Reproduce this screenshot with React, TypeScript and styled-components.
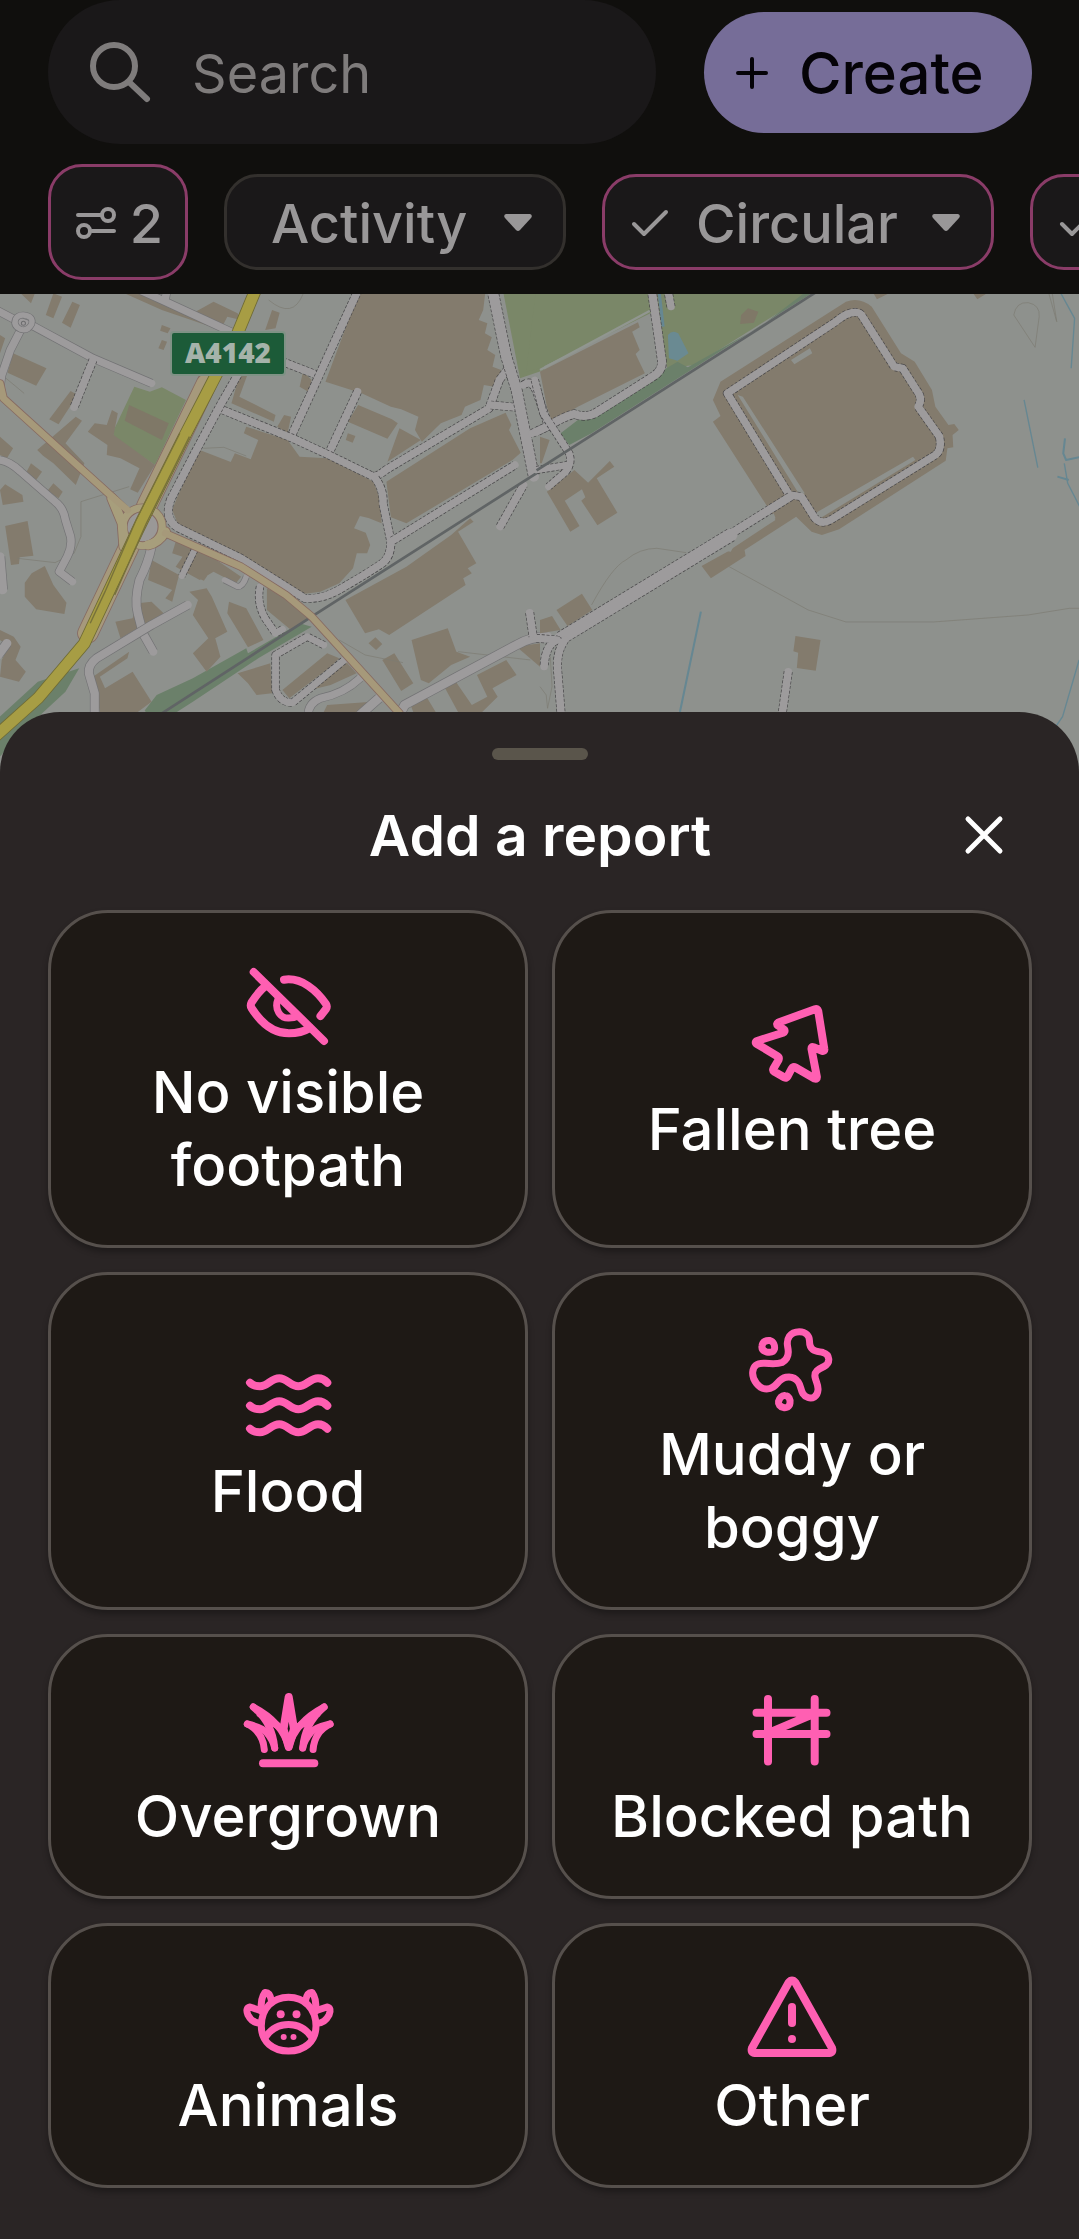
import React from "react";
import styled, { createGlobalStyle } from "styled-components";

const color = {
  page: "#100f0d",
  field: "#1a1819",
  dim: "#999798",
  placeholder: "#7f7c7c",
  accentDim: "#8a3c68",
  outlineDim: "#33302d",
  create: "#766d98",
  sheet: "#2a2525",
  handle: "#5a554b",
  card: "#1e1915",
  cardBorder: "#56504c",
  accent: "#ff5fb2",
};

const GlobalStyle = createGlobalStyle`
  *, *::before, *::after { box-sizing: border-box; }
  body {
    margin: 0;
    background: ${color.sheet};
    font-family: Inter, "Open Sans", sans-serif;
    font-size: 54px;
    font-weight: 500;
  }
  button, input { font: inherit; color: inherit; }
  button { cursor: pointer; }
`;

const Page = styled.main`
  display: flex;
  flex-direction: column;
  overflow: hidden;
`;

const Header = styled.header`
  display: flex;
  flex-direction: column;
  gap: 20px;
  padding-bottom: 14px;
  background: ${color.page};
`;

const SearchRow = styled.div`
  display: flex;
  align-items: center;
  gap: 48px;
  padding: 0 47px 0 48px;
`;

const SearchField = styled.label`
  flex: 1;
  min-width: 0;
  height: 144px;
  display: flex;
  align-items: center;
  gap: 38px;
  padding: 0 40px;
  border-radius: 72px;
  background: ${color.field};
  color: ${color.placeholder};
`;

const SearchInput = styled.input`
  flex: 1;
  min-width: 0;
  padding: 2px 0 0;
  border: 0;
  outline: 0;
  background: transparent;
  font-weight: 400;
  &::placeholder { color: ${color.placeholder}; opacity: 1; }
`;

const CreateButton = styled.button`
  height: 121px;
  min-width: 328px;
  display: flex;
  align-items: center;
  gap: 30px;
  padding: 2px 31px 0;
  border: 0;
  border-radius: 61px;
  background: ${color.create};
  color: #050308;
  font-size: 58px;
`;

const FilterRow = styled.div`
  display: flex;
  align-items: center;
  gap: 36px;
  padding-left: 48px;
  overflow: hidden;
`;

const Chip = styled.button<{ $active?: boolean; $tall?: boolean; $width: number }>`
  flex: none;
  min-width: ${(p) => p.$width}px;
  height: ${(p) => (p.$tall ? 116 : 96)}px;
  display: flex;
  align-items: center;
  justify-content: space-between;
  padding: ${(p) => (p.$tall ? "2px 22px 0 24px" : "2px 31px 0 26px")};
  border: 3px solid ${(p) => (p.$active ? color.accentDim : color.outlineDim)};
  border-radius: 34px;
  background: ${color.field};
  color: ${color.dim};
`;

const ChipLabel = styled.span<{ $inset?: boolean }>`
  flex: 1;
  padding-left: ${(p) => (p.$inset ? 18 : 27)}px;
  text-align: left;
`;

const MapArea = styled.div`
  height: 482px;
  svg { display: block; width: 100%; height: 100%; }
`;

const Sheet = styled.section`
  position: relative;
  margin-top: -64px;
  padding: 36px 47px 52px 48px;
  border-radius: 60px 60px 0 0;
  background: ${color.sheet};
  color: #fff;
`;

const Handle = styled.div`
  width: 96px;
  height: 12px;
  margin: 0 auto;
  border-radius: 6px;
  background: ${color.handle};
`;

const SheetHeader = styled.div`
  display: grid;
  grid-template-columns: 96px 1fr 96px;
  align-items: center;
  padding: 27px 0;
`;

const SheetTitle = styled.h1`
  grid-column: 2;
  margin: 0;
  padding-top: 2px;
  font-size: 57px;
  line-height: 94px;
  font-weight: 600;
  text-align: center;
`;

const CloseButton = styled.button`
  height: 96px;
  display: grid;
  place-items: center;
  padding: 0;
  border: 0;
  background: transparent;
`;

const ReportGrid = styled.div`
  display: grid;
  grid-template-columns: 1fr 1fr;
  gap: 24px;
`;

const ReportCard = styled.button`
  display: flex;
  flex-direction: column;
  align-items: center;
  justify-content: center;
  gap: 5px;
  padding: 46px 46px 43px;
  border: 3px solid ${color.cardBorder};
  border-radius: 60px;
  background: ${color.card};
  box-shadow: 0 4px 6px rgba(0, 0, 0, 0.3);
  font-size: 58px;
  line-height: 73px;
`;

const ReportIcon = styled.svg`
  width: 96px;
  height: 92px;
  overflow: visible;
  fill: none;
  stroke: ${color.accent};
  stroke-width: 8;
  stroke-linecap: round;
  stroke-linejoin: round;
`;

const ReportLabel = styled.span`
  max-width: 380px;
`;

const Check = () => (
  <svg width="38" height="30" viewBox="0 0 38 30" fill="none" stroke="currentColor" strokeWidth="4" strokeLinecap="round" strokeLinejoin="round">
    <path d="M3 16 L13 26 L35 4" />
  </svg>
);

const Caret = () => (
  <svg width="28" height="18" viewBox="0 0 28 18" fill="currentColor">
    <path d="M2 0 H26 Q29 1 27 4 L16 16 Q14 18 12 16 L1 4 Q-1 1 2 0 Z" />
  </svg>
);

const icons = {
  hidden: (
    <>
      <path d="M13.7 13 L84 82" />
      <path d="M44 20.7 C62 18 77 32 86 45 Q87.5 47.5 86 50 L80.5 57" />
      <path d="M25 27.5 Q19 32 11.5 43.5 Q10 46.5 11.5 49 C21 64 34 74.3 49 74.3 C57 74.3 64 72.5 70 69" />
      <path strokeWidth="7" d="M38 40 C34 50 40 59.5 49 59 Q54 59 58 57" />
    </>
  ),
  tree: (
    <path d="M71 13.2 L34.500 26.500 Q32 28 34 29.500 L40 33.500 Q41.500 35.500 39 36.800 L13 45 Q10.500 46.500 13 48 L33 60 Q35.500 61.500 34.500 64 L29.500 72.500 Q28.500 74.500 30.500 75.800 L40.500 81.500 Q42.500 82.500 43.500 80.500 L47.700 72.500 Q49 70 51.500 71.500 L70.500 82.500 Q73.300 83.500 72.800 80.500 L67.500 53 Q67.300 50.500 69.500 51.300 L78 54.800 Q80.800 55.500 80.300 53 L74.200 15 Q73.500 12.400 71 13.200 Z" />
  ),
  flood: (
    <>
      {[-5, 18, 41].map((y) => (
        <path key={y} transform={`translate(0 ${y})`} d="M10 29.7 C12 32 16 33.3 20 33.3 C28 33.3 31 25.3 39.3 25.3 C47 25.3 50.5 33.3 58.3 33.3 C66 33.3 70 25.3 78 25.3 C82 25.3 85 27 87.3 29.7" />
      ))}
    </>
  ),
  mud: (
    <g strokeWidth="7">
      <path d="M55.3 10.7 C62 10.7 65.5 15 65.5 20 C65.5 31 73 30 79 31.5 C86 33.5 87 42 80 45.5 C75 48 70 50 71 56 C72 61 74.5 64 74 69 C73.5 76 68 78 64 76.5 C56 74 58 66 54.3 61 C51 56.5 46 55.5 42 56.3 C33 58 33 68 22.7 68 C15 68 8 59 8.7 51 C9.5 43 15 42 21 42.3 C28 43 33 43.5 38 41.5 C45 38 45 32 43.7 26 C42 18 46 10.7 55.3 10.7 Z" />
      <path d="M18 25 C18.5 20.5 22.5 19 26 19.5 C29.5 20.5 31 24.5 30.5 28 C29.5 32 25.5 31.5 22.5 31 C19.5 30 17.5 28 18 25 Z" />
      <path d="M41 74.5 C45 75 46.5 78.5 46 82 C45.5 86 42.5 87 39.5 86.5 C36 86 34 83 34.5 80.5 C35.5 77 38 74 41 74.5 Z" />
    </g>
  ),
  grass: (
    <g transform="translate(0 -9)">
      <path d="M48.7 23 L43.5 55 L48.7 73 L54 55 Z" />
      {["", "translate(97.4 0) scale(-1 1)"].map((t) => (
        <g key={t} transform={t} strokeWidth="7">
          <path d="M13.3 33 Q42 48 48.7 73" />
          <path d="M13.3 33 Q33 50 34.7 74 M20 40 L38 52" />
          <path d="M7.3 50 Q24 54 27 59 Q33 66 34.7 74" />
          <path d="M7.3 50 Q23 58 24.3 75.5" />
        </g>
      ))}
      <path d="M23 89.3 H74.3" />
    </g>
  ),
  fence: (
    <path transform="translate(0 -9)" d="M24 25 V87.5 M70.7 25 V87.5 M12.5 38.7 H82.5 M12.5 60 H82.5 M28 57.5 L67 41" />
  ),
  cow: (
    <g strokeWidth="7">
      <path d="M48.5 25.3 C64 25.3 76 36 76 54 C76 70 64 79 48.5 79 C33 79 21.3 70 21.3 54 C21.3 36 33 25.3 48.5 25.3 Z" />
      <path d="M25.5 65 Q34 52.5 48.5 52.5 Q63 52.5 71.5 65" />
      {["", "translate(97 0) scale(-1 1)"].map((t) => (
        <g key={t} transform={t}>
          <path d="M21.5 39 Q20 27 25 20.5 Q30 20 31.5 29" />
          <path d="M20.5 38.5 L10 35 Q5 36 8 43 Q12 51 20 51.3" />
        </g>
      ))}
      <g fill={color.accent} stroke="none">
        <circle cx="40.7" cy="42.3" r="4" />
        <circle cx="56.5" cy="42.3" r="4" />
        <circle cx="43.7" cy="65" r="3" />
        <circle cx="53.5" cy="65" r="3" />
      </g>
    </g>
  ),
  warning: (
    <>
      <path d="M44.7 10.5 Q48 6.5 51.3 10.5 L88 76 Q89.5 80.7 85 81 H11 Q6.5 80.7 8 76 Z" />
      <path d="M48 35 V51" />
      <circle cx="48" cy="67" r="4" fill={color.accent} stroke="none" />
    </>
  ),
};

type IconName = keyof typeof icons;

const reports: { icon: IconName; label: string }[] = [
  { icon: "hidden", label: "No visible footpath" },
  { icon: "tree", label: "Fallen tree" },
  { icon: "flood", label: "Flood" },
  { icon: "mud", label: "Muddy or boggy" },
  { icon: "grass", label: "Overgrown" },
  { icon: "fence", label: "Blocked path" },
  { icon: "cow", label: "Animals" },
  { icon: "warning", label: "Other" },
];

const BUILDING = "#837b6d";
const GREEN = "#7a8768";
const WOOD = "#6b806a";

const westBuildings = [
  "M1045 0 H1410 L1403 60 L1390 90 L1415 100 L1408 130 L1428 142 L1415 180 L1438 195 L1430 230 L1455 240 L1435 290 L1405 285 L1395 330 L1350 350 L1340 375 L1280 400 L1225 455 L1205 420 L1215 380 L1165 358 L1135 350 L1050 310 L945 275 Z",
  "M580 480 L670 516 L682 490 L728 508 L750 450 L708 430 L715 410 L835 450 L870 500 L950 505 L1085 575 L1102 625 L1108 700 L1070 684 L1045 678 L1028 715 L1062 728 L1075 765 L1066 790 L1036 790 L1025 835 L985 880 L930 905 L880 912 L820 880 L520 710 L500 660 L515 620 Z",
  "M1122 575 L1365 415 L1468 368 L1485 405 L1478 420 L1512 488 L1488 510 L1180 700 L1135 682 Z",
  "M1040 345 L1138 388 L1155 400 L1125 446 L1010 395 Z M1160 415 L1222 450 L1125 515 Z M1010 430 l22 8 l-8 20 l-20 -8 Z",
  "M1003 930 L1180 830 L1310 735 L1365 685 L1375 695 L1330 725 L1383 820 L1358 835 L1370 850 L1345 865 L1352 885 L1130 1035 L1100 1018 L1060 1030 Z",
  "M1195 1050 L1300 1015 L1325 1085 L1365 1100 L1310 1125 L1245 1180 L1222 1170 Z M1110 1110 L1145 1090 L1200 1180 L1165 1203 Z M1070 1060 l20 -18 l20 20 l-18 18 Z",
  "M1290 1190 L1320 1170 L1370 1245 L1415 1220 L1385 1155 L1470 1110 L1500 1155 L1430 1195 L1445 1220 L1400 1266 H1330 Z M1500 1070 L1568 1060 V1130 Z M1190 1240 L1235 1215 L1265 1266 H1200 Z",
  "M38 190 L135 235 L105 287 L22 248 Z M155 10 L180 20 L155 85 L133 75 Z M210 35 L232 45 L205 113 L180 98 Z M50 0 H105 L90 40 Z M0 135 L15 145 L0 190 Z M340 0 H420 L560 70 L620 35 L690 70 L700 90 L660 80 L640 120 L470 60 Z",
  "M205 303 L225 315 L170 403 L143 388 Z M220 380 L238 392 L190 460 L245 520 L220 585 L155 520 L125 497 L108 480 Z M325 360 L342 370 L330 435 L450 525 L400 608 L378 598 L405 535 L350 505 L310 495 L312 465 L255 425 L275 400 L310 405 Z M470 105 l25 10 l-8 15 l-22 -8 Z M470 150 l15 5 l-10 25 l-15 -5 Z",
  "M0 440 L38 475 L20 505 L0 495 Z M90 520 L122 545 L105 570 L75 550 Z M15 583 L65 615 L68 635 L8 645 L0 600 Z M155 580 L182 605 L170 625 L138 602 Z",
  "M15 708 L80 693 L97 797 L57 802 L55 822 L32 825 Z M92 850 L130 828 L155 885 L193 938 L187 972 L105 958 L72 920 L72 878 Z M0 1020 L40 1040 L60 1070 L45 1110 L75 1145 L55 1175 L0 1160 L5 1110 L25 1070 L0 1050 Z",
  "M510 755 L600 790 L700 860 L685 880 L620 845 L580 870 L510 830 L530 800 L500 790 Z M440 810 L520 855 L500 935 L480 925 L500 900 L430 870 Z M400 940 L440 935 L475 970 L350 1045 L335 995 L385 985 Z M580 845 l22 12 l-10 15 l-18 -8 Z",
  "M550 905 L600 895 L615 920 L660 1025 L625 1045 L640 1100 L600 1145 L560 1090 L605 1045 L560 975 L575 930 Z M665 935 L715 955 L765 1050 L720 1072 L660 970 Z M775 895 L830 920 L900 985 L845 1020 L775 960 Z M690 1150 L785 1120 L790 1210 L745 1215 L720 1180 Z",
  "M950 1090 L985 1105 L960 1130 L840 1225 L820 1200 Z M1000 1110 L1035 1150 L960 1185 L900 1200 Z M385 1145 L440 1235 L400 1266 H290 L270 1160 L375 1085 L370 1105 L290 1160 L305 1195 Z M950 1245 L1080 1235 L1050 1266 H940 Z",
  "M790 60 L812 68 L800 115 L770 120 Z M700 240 L720 250 L695 320 L800 375 L795 395 L672 340 Z M825 375 L845 380 L835 430 L805 410 Z M880 245 L905 270 L895 305 L870 290 Z",
];

const eastBuildings = [
  "M0 245 L285 97 L290 112 L268 125 L290 180 L278 192 L305 250 L110 350 L35 395 L20 350 Z",
  "M890 35 Q930 20 965 50 L1050 190 L1090 215 L1140 300 L1150 350 L1188 405 L1205 402 L1218 420 L1200 435 L1202 472 L1185 475 L1180 512 L870 718 L820 735 L790 725 L745 680 L595 780 L598 798 L497 865 L470 828 L545 785 L685 690 L655 640 L503 395 L525 378 L503 330 L525 275 Z",
  "M20 605 L100 540 L140 578 L203 513 L216 530 L165 565 L225 668 L167 706 L120 632 L132 622 L122 598 L72 632 L115 708 L88 725 Z",
  "M48 960 L122 911 L152 960 L80 1008 Z M0 990 L35 978 L60 1020 L0 1030 Z M743 1038 L816 1050 L802 1142 L747 1134 L751 1088 L737 1084 Z M970 10 h45 l-35 18 Z M1260 10 h40 l-28 18 Z M0 440 L28 450 L5 520 L0 520 Z",
];

type RoadProps = { d: string; w?: number; solid?: boolean };

const Road = ({ d, w = 22, solid }: RoadProps) => (
  <>
    <path d={d} stroke={solid ? "#737375" : "#464547"} strokeWidth={w + 4} strokeDasharray={solid ? undefined : "9 5"} />
    <path d={d} stroke="#9d9b9c" strokeWidth={w} strokeLinecap="round" />
  </>
);

const westRoads: RoadProps[] = [
  { d: "M-10 60 L45 90 L100 110 L270 205 L440 280", solid: true },
  { d: "M65 110 L30 180 L5 255 L0 290", solid: true },
  { d: "M68 75 Q98 78 92 102 Q80 125 60 118 Q38 108 45 88 Q52 74 68 75 Z", w: 16, solid: true },
  { d: "M395 -5 L470 30 L680 130 M485 0 L480 25", solid: true },
  { d: "M270 210 L215 352" },
  { d: "M0 510 Q30 515 60 545 L160 635 Q185 655 190 690 L205 740 Q210 770 195 800 L172 845 L210 875", solid: true },
  { d: "M-5 1095 L20 1060 M0 800 L8 900", w: 26, solid: true },
  { d: "M440 770 Q430 820 405 870 Q390 930 400 970 L415 1030 L445 1085", w: 24, solid: true },
  { d: "M545 945 L440 1005 L280 1105 Q255 1125 258 1150 L275 1210 V1270", w: 24, solid: true },
  { d: "M820 215 L920 255" },
  { d: "M1040 0 L925 260 L845 440" },
  { d: "M1038 305 L955 490" },
  { d: "M635 355 L850 445 L955 495 L1080 558 Q1095 562 1120 540 L1420 355 L1450 270 L1480 230" },
  { d: "M1425 345 L1500 352" },
  { d: "M690 255 L640 345 L565 490 L495 630 Q475 690 520 715 L700 805 L885 925 Q940 930 1000 890 Q1060 855 1110 820 Q1135 800 1135 755 L1112 640 Q1115 600 1090 565" },
  { d: "M1140 752 L1495 525" },
  { d: "M1430 0 L1470 200 L1500 300 L1550 560", w: 30 },
  { d: "M1452 710 L1520 585" },
  { d: "M1545 430 L1590 410 M1520 285 Q1545 265 1560 310 L1590 400" },
  { d: "M565 780 L528 858", w: 18 },
  { d: "M715 860 Q705 890 690 890 L652 870", w: 16, solid: true },
  { d: "M755 890 Q745 940 770 985 L800 1030 L820 1018", w: 20 },
  { d: "M940 1065 L892 1040 L800 1095 V1200 Q815 1240 850 1238 L1000 1110", w: 20 },
  { d: "M895 1275 Q895 1240 930 1225 Q1000 1210 1045 1165", solid: true },
  { d: "M1045 1275 L1100 1225 M1160 1275 L1175 1245 L1500 1065 Q1540 1040 1590 1040", w: 26, solid: true },
  { d: "M1538 968 L1548 1040" },
];

const eastRoads: RoadProps[] = [
  { d: "M325 0 L342 120 L355 215 Q355 245 325 262 L160 370 Q130 385 100 372 Q70 380 30 405 L-10 425", w: 24 },
  { d: "M372 0 L381 50" },
  { d: "M-15 270 L10 370 L85 490 Q95 520 75 545 L25 590 M-10 540 L80 525", w: 20 },
  { d: "M920 67 Q895 65 860 95 L545 310 L725 615 L760 620 L800 685 Q820 705 845 690 L1150 495 Q1170 480 1162 440 L1100 350 Q1115 325 1095 300 L1055 235 L1030 230 L935 75 Q930 68 920 67 Z" },
  { d: "M728 620 L550 735", w: 24 },
  { d: "M555 735 L60 1045", w: 38 },
  { d: "M-10 1045 L50 1050 Q15 1065 12 1130 M72 1050 Q45 1090 52 1150 L62 1280" },
  { d: "M722 1145 L704 1275" },
];

const Contour = ({ d }: { d: string }) => <path d={d} stroke="#7c7b72" strokeWidth="2" />;

const StreetMap = () => (
  <svg viewBox="0 0 1079 482" preserveAspectRatio="xMidYMin slice" fill="none" strokeLinejoin="round" role="img" aria-label="Map">
    <rect width="1079" height="482" fill="#8e918d" />
    <g transform="translate(0 -4) scale(.3444 .3333)">
      <path fill={GREEN} d="M390 290 L435 305 L470 292 L540 330 L450 525 L330 440 L328 425 Z M1460 0 H1580 V240 L1510 265 Z" />
      <path fill="#7f7867" d="M375 345 L490 400 L470 450 L362 392 Z" />
      <path fill={WOOD} d="M420 1262 L455 1215 L560 1165 L715 1075 L720 1090 L870 1000 L905 1010 L750 1105 L560 1235 L500 1275 H430 Z M0 1280 L110 1175 L230 1135 L190 1205 L60 1330 L0 1400 Z" />
      {westBuildings.map((d) => <path key={d} d={d} fill={BUILDING} />)}
      <Contour d="M375 590 L235 635 V740 L215 790 L160 818 L50 805 M590 475 L650 472 L715 498 M0 250 L70 310 M985 1050 L1060 1095 L1170 1118 M1330 1085 L1540 1110 M780 30 Q850 90 880 12" />
      {westRoads.map((r) => <Road key={r.d} {...r} />)}
      <circle cx="68" cy="100" r="6" stroke="#6d6d6f" strokeWidth="3" />
      <path d="M470 1270 L905 980 L1580 535" stroke="#606465" strokeWidth="8" />
      <g strokeLinecap="round">
        <path stroke="#876b62" strokeWidth="25" d="M0 280 L10 325 L320 615 L360 655 M480 730 L700 830 L830 915 L905 980 L1160 1270" />
        <path stroke="#876b62" strokeWidth="62" d="M600 280 L520 450 L430 640 L370 780 L255 1030" />
        <path stroke="#a6997c" strokeWidth="57" d="M600 280 L520 450 L430 640 L370 780 L255 1030" />
        <path stroke="#876b62" strokeWidth="32" d="M325 625 L355 700 L360 770 M480 725 Q460 760 430 765" />
        <circle cx="414" cy="710" r="56" stroke="#876b62" strokeWidth="27" />
        <circle cx="414" cy="710" r="56" stroke="#a79e7c" strokeWidth="23" />
        <circle cx="414" cy="710" r="45" fill="#9a9897" stroke="#876b62" strokeWidth="3" />
        <path stroke="#a79e7c" strokeWidth="27" d="M325 625 L355 700 L360 770 M480 725 Q460 760 430 765" />
        <path stroke="#a6997a" strokeWidth="20" d="M0 280 L10 325 L320 615 L370 660 M480 730 L700 830 L830 915 L905 980 L1160 1270" />
      </g>
      <path stroke="#6f6b36" strokeWidth="37" d="M742 0 L690 130 L600 310 L530 450 L400 720 L245 1060 L110 1225 L-20 1345" />
      <path stroke="#a79d44" strokeWidth="32" d="M742 0 L690 130 L600 310 L530 450 L400 720 L245 1060 L110 1225 L-20 1345" />
      <path stroke="#77713a" strokeWidth="4" d="M522 430 L395 690 L305 905 L262 1000 M550 440 L425 700 L333 915" />
    </g>
    <g transform="translate(540 -4) scale(.3438 .3333)">
      <path fill={GREEN} d="M-12 0 H800 L450 225 L370 235 L340 60 L0 235 L-40 245 Z" />
      <path fill={WOOD} d="M780 0 H805 L150 430 L85 465 L60 430 L110 390 L400 215 L430 232 L640 110 Z" />
      <path fill="#7f7867" d="M605 55 L635 65 L622 98 L582 102 L585 75 Z" />
      <path fill="#6a8a92" d="M372 135 Q385 118 402 130 L432 190 L400 212 L375 205 Z" />
      {eastBuildings.map((d) => <path key={d} d={d} fill={BUILDING} />)}
      <path fill="#8e918d" d="M730 210 L785 175 L792 190 L740 223 Z M575 315 L590 320 L770 610 L755 615 Z M800 670 L1085 500 L1092 510 L815 685 Z M520 780 L640 700 L680 670 L685 685 L565 765 L555 785 Z" />
      <path stroke="#919690" strokeWidth="7" d="M0 240 L320 62" />
      <g stroke="#668792" strokeWidth="6">
        <path d="M1515 10 L1555 85 L1545 235 M1568 1110 L1520 1280 L1500 1310 M1525 520 L1535 580 L1575 660 M1408 330 L1448 533" strokeWidth="4" />
        <path d="M468 965 L407 1266 M1527 445 L1522 490 L1530 510 L1575 500 M1505 560 L1538 570" />
        <path d="M347 10 L358 110" strokeWidth="9" />
      </g>
      <Contour d="M150 945 Q210 830 250 810 Q290 775 340 775 L425 788 M550 830 L780 960 L890 996 H1145 L1420 975 L1540 955 H1580 M1440 172 L1378 75 Q1385 35 1420 38 Q1455 45 1452 80 Z M1480 10 L1503 95 L1490 10 M30 1100 L35 1190 L22 1255 L18 1215 L0 1190" />
      {eastRoads.map((r) => <Road key={r.d} {...r} />)}
      <path d="M-10 541 L805 5" stroke="#606465" strokeWidth="8" />
    </g>
    <rect x="171" y="38" width="114" height="43" rx="3" fill="#1c5b38" stroke="#7f9285" strokeWidth="2" />
    <text x="228" y="69" textAnchor="middle" fill="#a5b3aa" fontFamily="Open Sans, sans-serif" fontSize="28" fontWeight="800">A4142</text>
  </svg>
);

export default function App() {
  return (
    <Page>
      <GlobalStyle />
      <Header>
        <SearchRow>
          <SearchField>
            <svg width="66" height="66" viewBox="0 0 66 66" fill="none" stroke="currentColor" strokeWidth="6" strokeLinecap="round" aria-hidden="true">
              <circle cx="26" cy="27" r="21" />
              <path d="M41 43 L59 60" />
            </svg>
            <SearchInput type="search" placeholder="Search" aria-label="Search" />
          </SearchField>
          <CreateButton>
            <svg width="34" height="34" viewBox="0 0 34 34" stroke="currentColor" strokeWidth="4" strokeLinecap="round" aria-hidden="true">
              <path d="M17 3 V31 M3 17 H31" />
            </svg>
            Create
          </CreateButton>
        </SearchRow>
        <FilterRow>
          <Chip $active $tall $width={140}>
            <svg width="42" height="34" viewBox="0 0 42 34" fill="none" stroke="currentColor" strokeWidth="4" strokeLinecap="round" aria-hidden="true">
              <path d="M3 9 H26 M17 25 H39" />
              <circle cx="33" cy="9" r="6" />
              <circle cx="9" cy="25" r="6" />
            </svg>
            2
          </Chip>
          <Chip $width={342} aria-haspopup="listbox">
            <ChipLabel $inset>Activity</ChipLabel>
            <Caret />
          </Chip>
          <Chip $active $width={392} aria-haspopup="listbox">
            <Check />
            <ChipLabel>Circular</ChipLabel>
            <Caret />
          </Chip>
          <Chip $active $width={392} aria-haspopup="listbox" aria-label="More">
            <Check />
          </Chip>
        </FilterRow>
      </Header>
      <MapArea>
        <StreetMap />
      </MapArea>
      <Sheet aria-labelledby="sheet-title">
        <Handle />
        <SheetHeader>
          <SheetTitle id="sheet-title">Add a report</SheetTitle>
          <CloseButton aria-label="Close">
            <svg width="40" height="40" viewBox="0 0 40 40" stroke="currentColor" strokeWidth="5" strokeLinecap="round" aria-hidden="true">
              <path d="M4 4 L36 36 M36 4 L4 36" />
            </svg>
          </CloseButton>
        </SheetHeader>
        <ReportGrid>
          {reports.map((r) => (
            <ReportCard key={r.label} type="button">
              <ReportIcon viewBox="0 0 96 92" aria-hidden="true">{icons[r.icon]}</ReportIcon>
              <ReportLabel>{r.label}</ReportLabel>
            </ReportCard>
          ))}
        </ReportGrid>
      </Sheet>
    </Page>
  );
}
